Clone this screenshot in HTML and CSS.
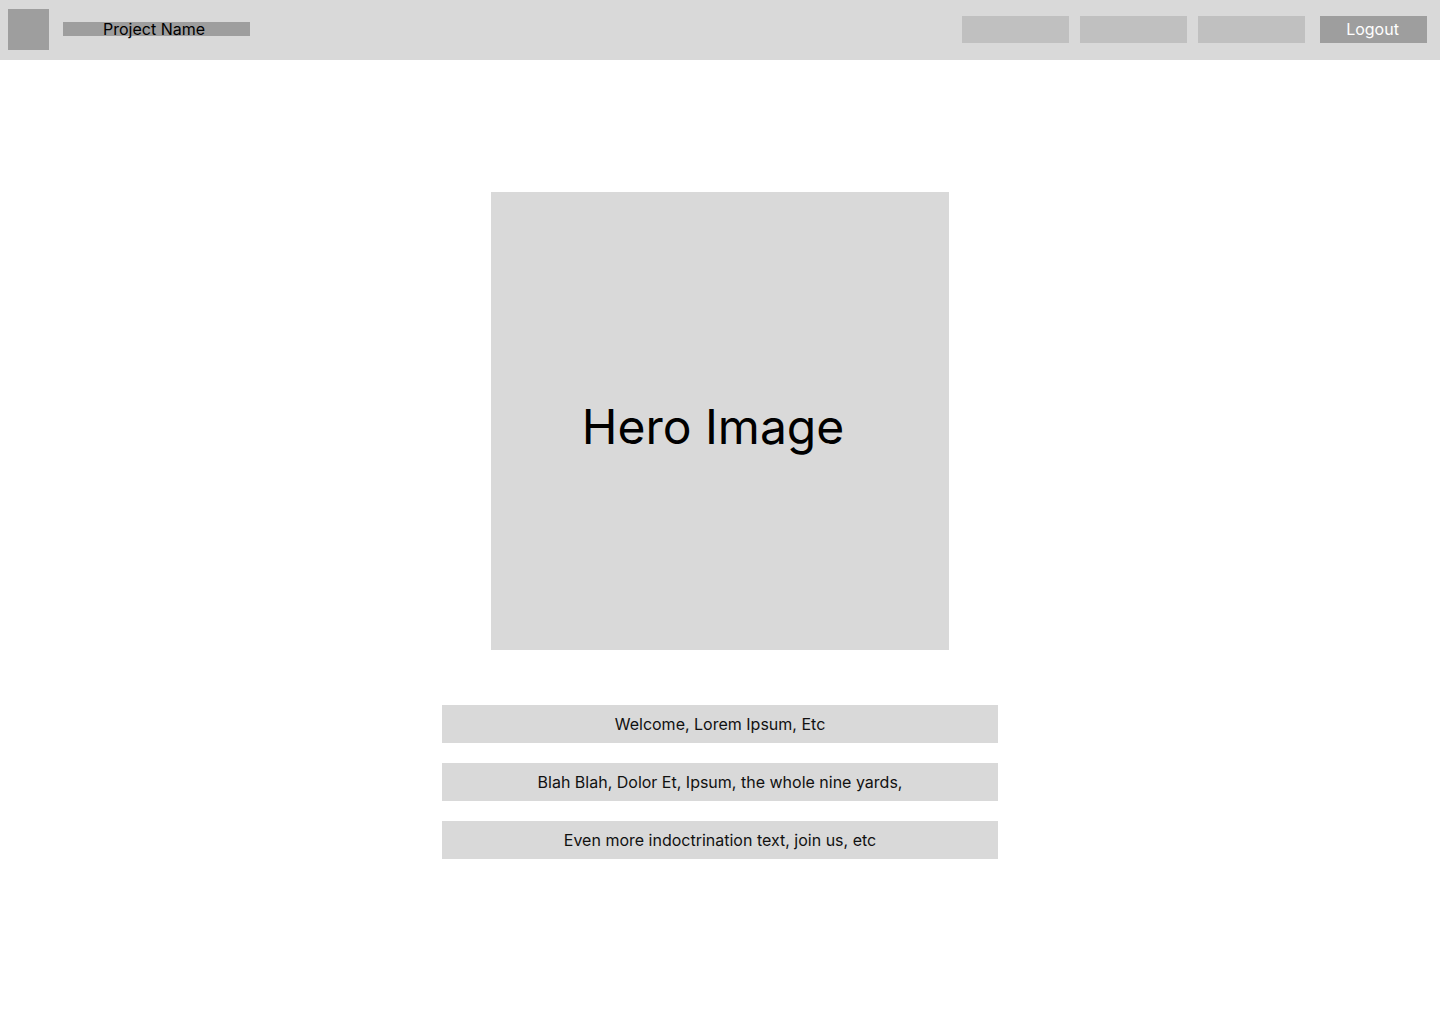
FILE: index.html
```html
<!DOCTYPE html>
<html lang="en">
<head>
<meta charset="utf-8">
<title>Project Name</title>
<link rel="stylesheet" href="styles.css">
</head>
<body>
<header class="topbar">
  <div class="brand">
    <div class="logo"></div>
    <div class="project-name">Project Name</div>
  </div>
  <nav class="nav">
    <div class="nav-item"></div>
    <div class="nav-item"></div>
    <div class="nav-item"></div>
    <div class="logout">Logout</div>
  </nav>
</header>
<main class="main">
  <div class="hero"><span class="hero-label">Hero Image</span></div>
  <div class="lines">
    <div class="line">Welcome, Lorem Ipsum, Etc</div>
    <div class="line">Blah Blah, Dolor Et, Ipsum, the whole nine yards,</div>
    <div class="line">Even more indoctrination text, join us, etc</div>
  </div>
</main>
</body>
</html>
```
FILE: styles.css
```css
html, body {
  margin: 0;
  padding: 0;
  background: #ffffff;
  font-family: Inter, "Noto Sans", "Liberation Sans", sans-serif;
  color: #000;
}

.topbar {
  height: 60px;
  background: #d9d9d9;
  display: flex;
  align-items: flex-start;
  justify-content: space-between;
  box-sizing: border-box;
}

.brand {
  display: flex;
  align-items: flex-start;
  padding-left: 8px;
  padding-top: 9px;
}

.logo {
  width: 41px;
  height: 41px;
  background: #9e9e9e;
}

.project-name {
  margin-left: 14px;
  margin-top: 13px;
  width: 187px;
  height: 14px;
  background: #9e9e9e;
  box-sizing: border-box;
  padding-left: 40px;
  font-size: 16px;
  line-height: 14px;
  white-space: nowrap;
}

.nav {
  display: flex;
  align-items: center;
  padding-top: 16px;
  padding-right: 13px;
}

.nav-item {
  width: 107px;
  height: 27px;
  background: #c0c0c0;
  margin-right: 11px;
}

.nav-item:nth-child(3) {
  margin-right: 15px;
}

.logout {
  width: 107px;
  height: 27px;
  background: #9e9e9e;
  color: #ffffff;
  font-size: 16px;
  line-height: 27px;
  text-align: center;
  padding-right: 2px;
  box-sizing: border-box;
}

.main {
  display: flex;
  flex-direction: column;
  align-items: center;
  padding-top: 132px;
}

.hero {
  width: 458px;
  height: 458px;
  background: #d9d9d9;
  display: flex;
  align-items: center;
  justify-content: center;
  box-sizing: border-box;
  padding-right: 14px;
  padding-top: 11px;
}

.hero-label {
  font-size: 48px;
  line-height: 58px;
}

.lines {
  margin-top: 55px;
  display: flex;
  flex-direction: column;
  gap: 20px;
}

.line {
  width: 556px;
  height: 38px;
  background: #d9d9d9;
  font-size: 16px;
  line-height: 38px;
  text-align: center;
  color: #111;
}
```
